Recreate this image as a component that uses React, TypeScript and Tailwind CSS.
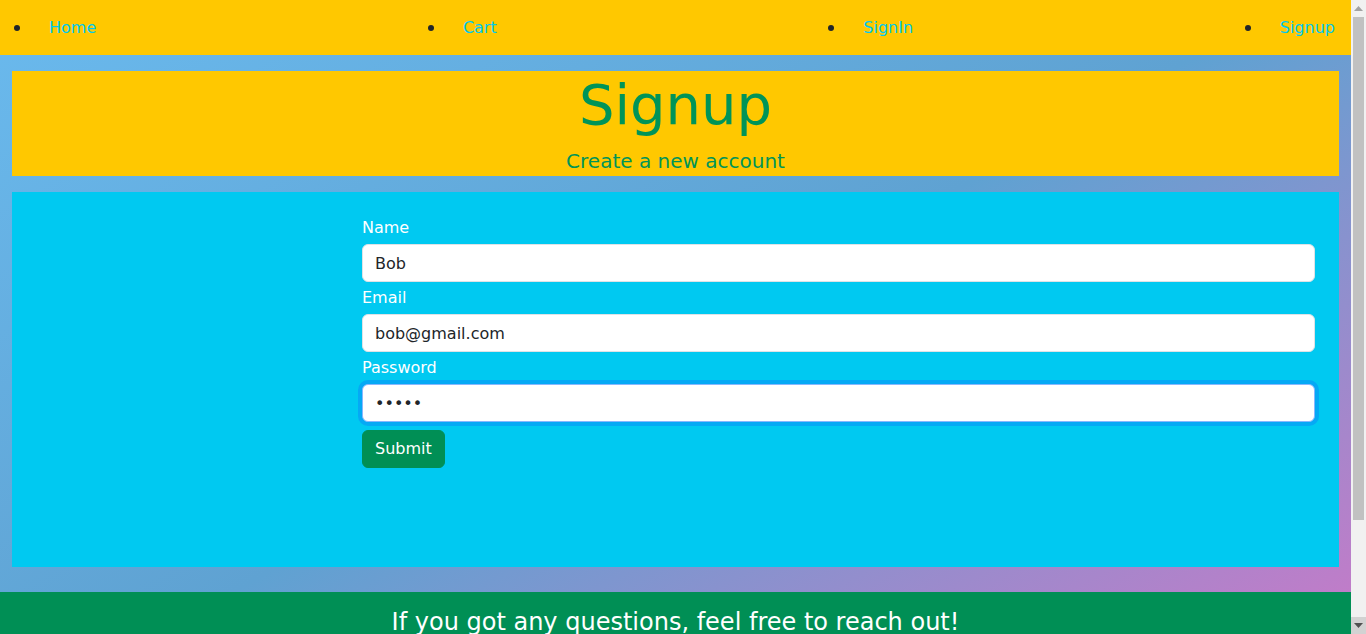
import React from "react";

const links = ["Home", "Cart", "SignIn", "Signup"];

function Scrollbar() {
  return (
    <div className="flex h-full w-[15px] shrink-0 flex-col bg-[#f1f1f1]">
      <div className="flex h-[17px] items-center justify-center">
        <svg width="9" height="5" viewBox="0 0 9 5">
          <path d="M0 5 L4.5 0 L9 5 Z" fill="#a3a3a3" />
        </svg>
      </div>
      <div className="flex-1 px-[2px] pb-[97px]">
        <div className="h-full bg-[#c1c1c1]" />
      </div>
      <div className="flex h-[17px] items-center justify-center bg-[#d2d2d2]">
        <svg width="9" height="5" viewBox="0 0 9 5">
          <path d="M0 0 L9 0 L4.5 5 Z" fill="#505050" />
        </svg>
      </div>
    </div>
  );
}

export default function App() {
  const labelClass = "block mb-1 text-white text-base leading-6";
  const inputClass =
    "block w-full h-[38px] rounded-md border border-[#dee2e6] bg-white px-3 text-base text-[#212529] outline-none";

  return (
    <div className="flex h-screen overflow-hidden font-['DejaVu_Sans',sans-serif]">
      <div className="min-w-0 flex-1 overflow-hidden">
        <div className="min-h-[752px] bg-[linear-gradient(to_bottom_right,#6abaee_0%,#5fa2d2_48%,#c67ac8_92%)]">
          <nav className="h-[55px] bg-[#ffc800]">
            <ul className="flex h-full items-center justify-between pl-[14px] pr-[16px]">
              {links.map((l) => (
                <li key={l} className="flex items-center gap-[29px]">
                  <span className="h-[6px] w-[6px] rounded-full bg-[#212529]" />
                  <a href="#" className="text-base leading-6 text-[#00c9ee]">
                    {l}
                  </a>
                </li>
              ))}
            </ul>
          </nav>

          <header className="mx-3 mt-4 bg-[#ffc800] text-center text-[#009458]">
            <h1 className="mb-2 text-[56px] leading-[1.2]">Signup</h1>
            <p className="text-xl leading-[30px]">Create a new account</p>
          </header>

          <main className="mx-3 mt-4 h-[375px] bg-[#00c9f1] pl-[350px] pr-6 pt-6">
            <form onSubmit={(e) => e.preventDefault()}>
              <div className="mb-1">
                <label className={labelClass}>Name</label>
                <input type="text" defaultValue="Bob" className={inputClass} />
              </div>
              <div className="mb-1">
                <label className={labelClass}>Email</label>
                <input type="email" defaultValue="bob@gmail.com" className={inputClass} />
              </div>
              <div className="mb-2">
                <label className={labelClass}>Password</label>
                <input
                  type="password"
                  defaultValue="12345"
                  className="block w-full h-[38px] rounded-md border border-[#86b7fe] bg-white px-3 text-base text-[#212529] outline-none shadow-[0_0_0_4px_rgba(13,110,253,0.35)]"
                />
              </div>
              <button
                type="submit"
                className="h-[38px] rounded-md border border-[#008f55] bg-[#008f55] px-3 text-base leading-6 text-white"
              >
                Submit
              </button>
            </form>
          </main>

          <footer className="mt-[25px] h-[160px] bg-[#008f55] pt-3 text-center text-white">
            <p className="text-2xl leading-9">If you got any questions, feel free to reach out!</p>
          </footer>
        </div>
      </div>
      <Scrollbar />
    </div>
  );
}
